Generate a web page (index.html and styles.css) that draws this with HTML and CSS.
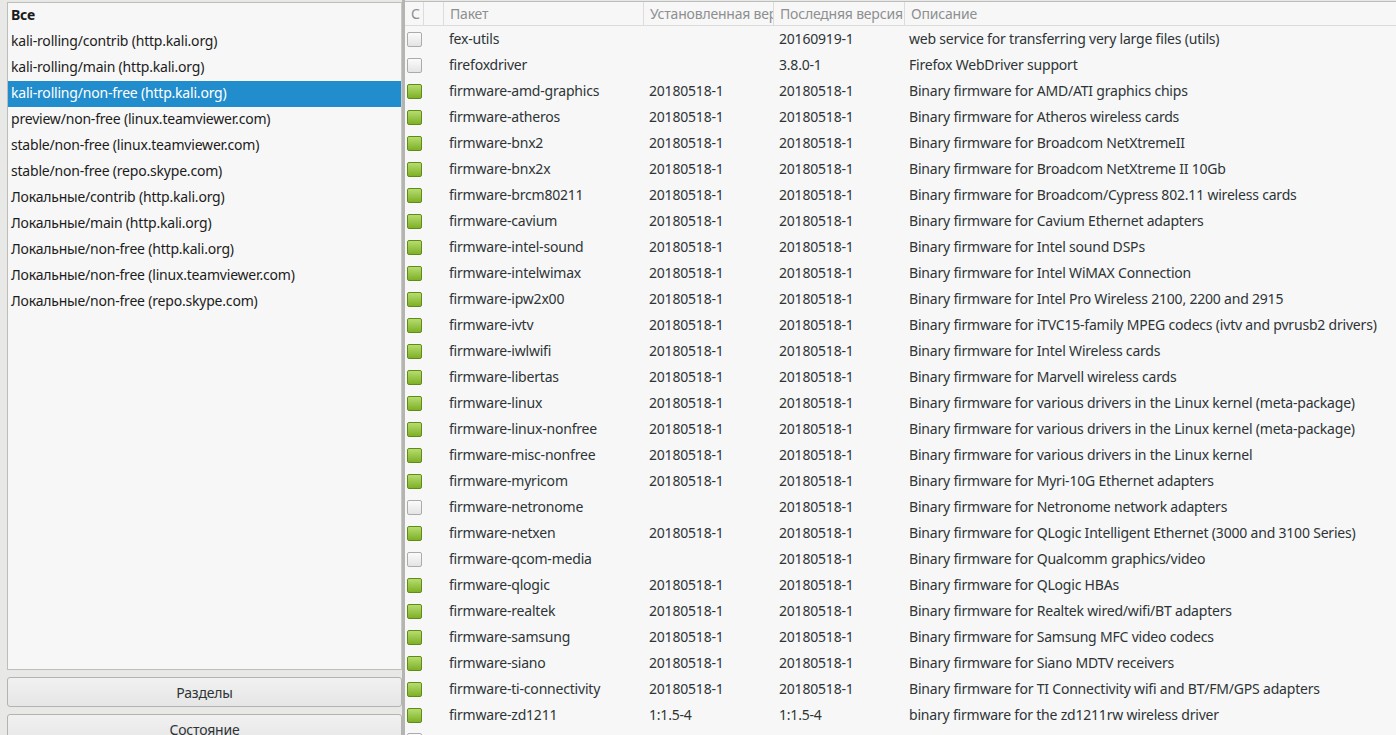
FILE: index.html
```html
<!DOCTYPE html>
<html lang="ru">
<head>
<meta charset="utf-8">
<title>Synaptic</title>
<link rel="stylesheet" href="styles.css">
</head>
<body>
<div class="window">
  <div class="left">
    <ul class="sections">
      <li class="all">Все</li>
      <li>kali-rolling/contrib (http.kali.org)</li>
      <li>kali-rolling/main (http.kali.org)</li>
      <li class="selected">kali-rolling/non-free (http.kali.org)</li>
      <li>preview/non-free (linux.teamviewer.com)</li>
      <li>stable/non-free (linux.teamviewer.com)</li>
      <li>stable/non-free (repo.skype.com)</li>
      <li>Локальные/contrib (http.kali.org)</li>
      <li>Локальные/main (http.kali.org)</li>
      <li>Локальные/non-free (http.kali.org)</li>
      <li>Локальные/non-free (linux.teamviewer.com)</li>
      <li>Локальные/non-free (repo.skype.com)</li>
    </ul>
    <button class="btn">Разделы</button>
    <button class="btn">Состояние</button>
  </div>
  <div class="sep"></div>
  <div class="right">
    <table class="pkgs">
      <colgroup>
        <col class="c-status"><col class="c-mark"><col class="c-name"><col class="c-inst"><col class="c-latest"><col class="c-desc">
      </colgroup>
      <thead>
        <tr><th>С</th><th></th><th>Пакет</th><th>Установленная версия</th><th>Последняя версия</th><th>Описание</th></tr>
      </thead>
      <tbody>
        <tr><td><span class="cb"></span></td><td></td><td>fex-utils</td><td></td><td>20160919-1</td><td>web service for transferring very large files (utils)</td></tr>
        <tr><td><span class="cb"></span></td><td></td><td>firefoxdriver</td><td></td><td>3.8.0-1</td><td>Firefox WebDriver support</td></tr>
        <tr><td><span class="cb on"></span></td><td></td><td>firmware-amd-graphics</td><td>20180518-1</td><td>20180518-1</td><td>Binary firmware for AMD/ATI graphics chips</td></tr>
        <tr><td><span class="cb on"></span></td><td></td><td>firmware-atheros</td><td>20180518-1</td><td>20180518-1</td><td>Binary firmware for Atheros wireless cards</td></tr>
        <tr><td><span class="cb on"></span></td><td></td><td>firmware-bnx2</td><td>20180518-1</td><td>20180518-1</td><td>Binary firmware for Broadcom NetXtremeII</td></tr>
        <tr><td><span class="cb on"></span></td><td></td><td>firmware-bnx2x</td><td>20180518-1</td><td>20180518-1</td><td>Binary firmware for Broadcom NetXtreme II 10Gb</td></tr>
        <tr><td><span class="cb on"></span></td><td></td><td>firmware-brcm80211</td><td>20180518-1</td><td>20180518-1</td><td>Binary firmware for Broadcom/Cypress 802.11 wireless cards</td></tr>
        <tr><td><span class="cb on"></span></td><td></td><td>firmware-cavium</td><td>20180518-1</td><td>20180518-1</td><td>Binary firmware for Cavium Ethernet adapters</td></tr>
        <tr><td><span class="cb on"></span></td><td></td><td>firmware-intel-sound</td><td>20180518-1</td><td>20180518-1</td><td>Binary firmware for Intel sound DSPs</td></tr>
        <tr><td><span class="cb on"></span></td><td></td><td>firmware-intelwimax</td><td>20180518-1</td><td>20180518-1</td><td>Binary firmware for Intel WiMAX Connection</td></tr>
        <tr><td><span class="cb on"></span></td><td></td><td>firmware-ipw2x00</td><td>20180518-1</td><td>20180518-1</td><td>Binary firmware for Intel Pro Wireless 2100, 2200 and 2915</td></tr>
        <tr><td><span class="cb on"></span></td><td></td><td>firmware-ivtv</td><td>20180518-1</td><td>20180518-1</td><td>Binary firmware for iTVC15-family MPEG codecs (ivtv and pvrusb2 drivers)</td></tr>
        <tr><td><span class="cb on"></span></td><td></td><td>firmware-iwlwifi</td><td>20180518-1</td><td>20180518-1</td><td>Binary firmware for Intel Wireless cards</td></tr>
        <tr><td><span class="cb on"></span></td><td></td><td>firmware-libertas</td><td>20180518-1</td><td>20180518-1</td><td>Binary firmware for Marvell wireless cards</td></tr>
        <tr><td><span class="cb on"></span></td><td></td><td>firmware-linux</td><td>20180518-1</td><td>20180518-1</td><td>Binary firmware for various drivers in the Linux kernel (meta-package)</td></tr>
        <tr><td><span class="cb on"></span></td><td></td><td>firmware-linux-nonfree</td><td>20180518-1</td><td>20180518-1</td><td>Binary firmware for various drivers in the Linux kernel (meta-package)</td></tr>
        <tr><td><span class="cb on"></span></td><td></td><td>firmware-misc-nonfree</td><td>20180518-1</td><td>20180518-1</td><td>Binary firmware for various drivers in the Linux kernel</td></tr>
        <tr><td><span class="cb on"></span></td><td></td><td>firmware-myricom</td><td>20180518-1</td><td>20180518-1</td><td>Binary firmware for Myri-10G Ethernet adapters</td></tr>
        <tr><td><span class="cb"></span></td><td></td><td>firmware-netronome</td><td></td><td>20180518-1</td><td>Binary firmware for Netronome network adapters</td></tr>
        <tr><td><span class="cb on"></span></td><td></td><td>firmware-netxen</td><td>20180518-1</td><td>20180518-1</td><td>Binary firmware for QLogic Intelligent Ethernet (3000 and 3100 Series)</td></tr>
        <tr><td><span class="cb"></span></td><td></td><td>firmware-qcom-media</td><td></td><td>20180518-1</td><td>Binary firmware for Qualcomm graphics/video</td></tr>
        <tr><td><span class="cb on"></span></td><td></td><td>firmware-qlogic</td><td>20180518-1</td><td>20180518-1</td><td>Binary firmware for QLogic HBAs</td></tr>
        <tr><td><span class="cb on"></span></td><td></td><td>firmware-realtek</td><td>20180518-1</td><td>20180518-1</td><td>Binary firmware for Realtek wired/wifi/BT adapters</td></tr>
        <tr><td><span class="cb on"></span></td><td></td><td>firmware-samsung</td><td>20180518-1</td><td>20180518-1</td><td>Binary firmware for Samsung MFC video codecs</td></tr>
        <tr><td><span class="cb on"></span></td><td></td><td>firmware-siano</td><td>20180518-1</td><td>20180518-1</td><td>Binary firmware for Siano MDTV receivers</td></tr>
        <tr><td><span class="cb on"></span></td><td></td><td>firmware-ti-connectivity</td><td>20180518-1</td><td>20180518-1</td><td>Binary firmware for TI Connectivity wifi and BT/FM/GPS adapters</td></tr>
        <tr><td><span class="cb on"></span></td><td></td><td>firmware-zd1211</td><td>1:1.5-4</td><td>1:1.5-4</td><td>binary firmware for the zd1211rw wireless driver</td></tr>
        <tr class="partial"><td><span class="cb"></span></td><td></td><td></td><td></td><td></td><td></td></tr>
      </tbody>
    </table>
  </div>
</div>
</body>
</html>
```

FILE: styles.css
```css
html, body {
  margin: 0;
  padding: 0;
}

body {
  width: 1396px;
  height: 735px;
  overflow: hidden;
  background: #e8e8e7;
  font-family: "Noto Sans", "Open Sans", "DejaVu Sans", sans-serif;
  font-size: 14px;
  letter-spacing: -0.2px;
  color: #2e3436;
}

.window {
  display: flex;
  height: 735px;
  overflow: hidden;
}

/* ---------- left pane ---------- */
.left {
  width: 402px;
  flex: none;
  box-sizing: border-box;
  padding: 2px 0 0 7px;
  display: flex;
  flex-direction: column;
  overflow: hidden;
}

.sections {
  list-style: none;
  margin: 0;
  padding: 0;
  height: 668px;
  flex: none;
  box-sizing: border-box;
  border: 1px solid #bdbdbb;
  border-right-color: #c8c8c6;
  background: #f7f7f7;
  color: #1c1c1c;
}

.sections li {
  height: 26px;
  line-height: 24px;
  padding-left: 3px;
  white-space: nowrap;
}

.sections li.all {
  font-weight: bold;
}

.sections li.selected {
  background: #218dcd;
  color: #ffffff;
}

.btn {
  flex: none;
  height: 30px;
  margin-top: 7px;
  padding: 0;
  box-sizing: border-box;
  border: 1px solid #b3b3b1;
  border-radius: 3px;
  background: linear-gradient(#f1f1f1, #e6e6e6);
  font-family: inherit;
  font-size: 14px;
  letter-spacing: -0.2px;
  color: #2e3436;
  text-align: center;
}

/* ---------- separator ---------- */
.sep {
  width: 3px;
  flex: none;
  background: #b4b4b3;
}

/* ---------- right pane ---------- */
.right {
  flex: 1;
  padding-top: 1px;
  overflow: hidden;
}

.pkgs {
  width: 991px;
  table-layout: fixed;
  border-collapse: separate;
  border-spacing: 0;
  background: #f7f7f7;
  border-top: 1px solid #bdbdbb;
}

.c-status { width: 19px; }
.c-mark { width: 20px; }
.c-name { width: 200px; }
.c-inst { width: 130px; }
.c-latest { width: 131px; }
.c-desc { width: 491px; }

.pkgs th {
  height: 23px;
  line-height: 23px;
  padding: 0 0 0 6px;
  text-align: left;
  font-weight: normal;
  color: #8d8f90;
  white-space: nowrap;
  overflow: hidden;
  text-overflow: clip;
  border-bottom: 1px solid #dcdcdb;
  border-right: 1px solid #dcdcdb;
}

.pkgs th:last-child {
  border-right: none;
}

.pkgs td {
  height: 26px;
  line-height: 26px;
  padding: 0 0 0 5px;
  white-space: nowrap;
  overflow: hidden;
  color: #2e3436;
}

.pkgs td:last-child {
  padding-left: 4px;
}

.pkgs td:first-child {
  padding-left: 2px;
}

.cb {
  display: block;
  width: 15px;
  height: 15px;
  box-sizing: border-box;
  border: 1px solid #ababab;
  border-radius: 2px;
  background: linear-gradient(#fbfbfb, #e4e4e4);
}

.cb.on {
  border-color: #5f8b16;
  background: linear-gradient(#b6dd70, #7fb026);
}

.partial td {
  vertical-align: top;
}

.partial .cb {
  margin-top: 5px;
}
```
